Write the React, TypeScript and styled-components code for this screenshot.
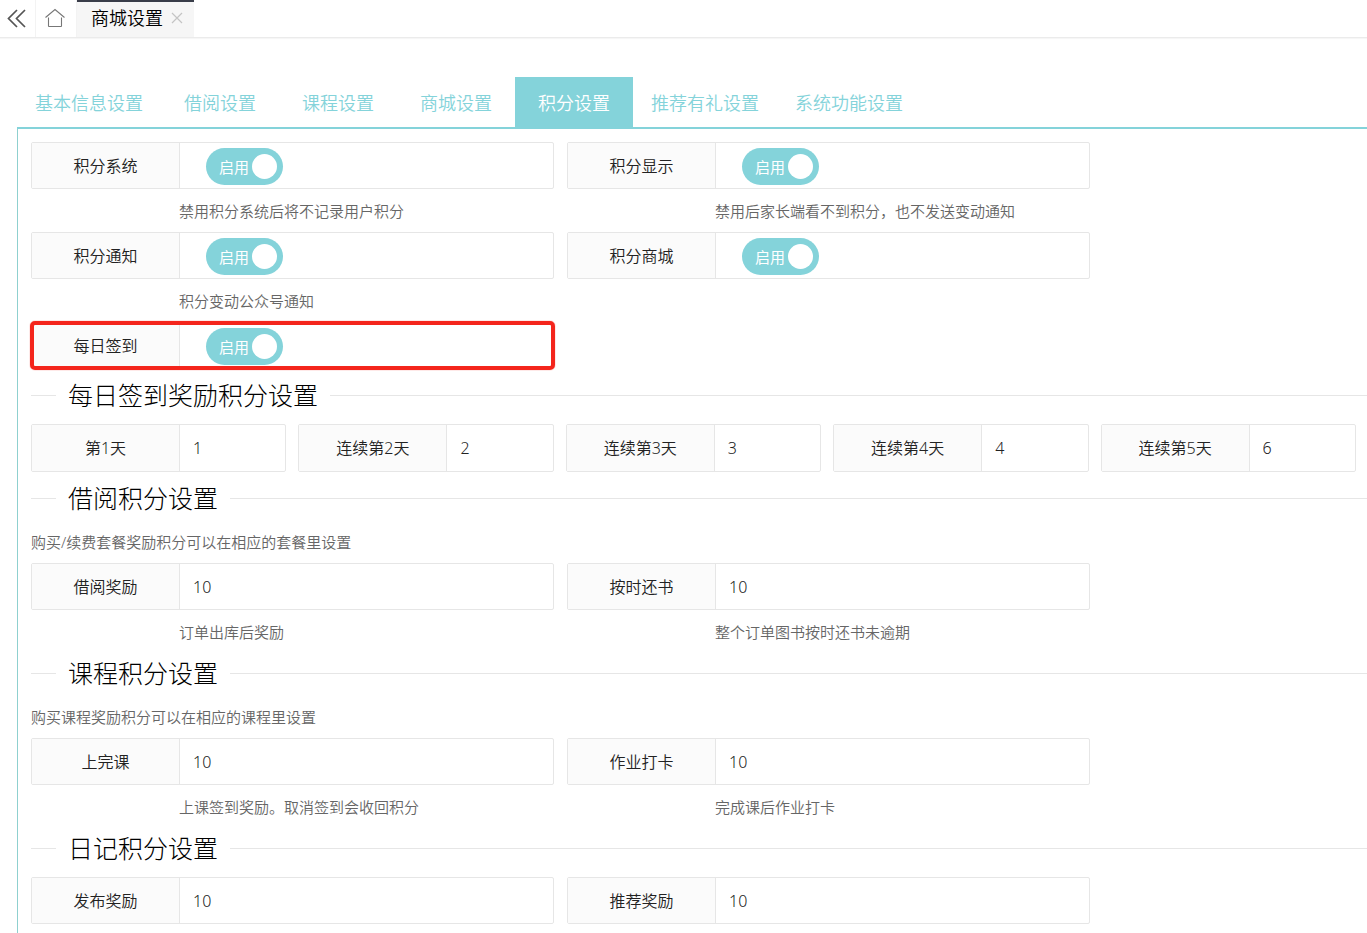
import React from 'react';
import styled, { createGlobalStyle } from 'styled-components';

const teal = '#84d3da';
const line = '#e6e6e6';

const GlobalStyle = createGlobalStyle`
  * { box-sizing: border-box; }
  body {
    margin: 0;
    background: #fff;
    color: #222;
    font-family: 'Noto Sans', 'Noto Sans CJK SC', sans-serif;
    font-size: 16px;
    font-weight: 350;
  }
  #root { overflow-x: hidden; }
  button, input { font: inherit; color: inherit; }
`;

const Page = styled.div`
  display: flex;
  flex-direction: column;
  min-height: 100vh;
`;

const TopBar = styled.header`
  display: flex;
  height: 38px;
  border-bottom: 1px solid #ebebeb;
  box-shadow: 0 1px 1px #f6f6f6;
`;

const IconButton = styled.button<{ $width: number }>`
  display: flex;
  align-items: center;
  justify-content: center;
  width: ${(p) => p.$width}px;
  padding: 0 2px 2px 0;
  border: 0;
  border-right: 1px solid #f3f3f3;
  background: none;
`;

const PageTab = styled.div`
  display: flex;
  align-items: center;
  gap: 8px;
  padding: 0 11px 4px 14px;
  border-top: 2px solid #393d49;
  background: #f6f6f6;
  color: #000;
  font-size: 18px;
  line-height: 30px;
`;

const PageTabLink = styled.a`
  color: inherit;
  text-decoration: none;
`;

const CloseButton = styled.button`
  display: flex;
  padding: 0;
  border: 0;
  background: none;
`;

const Main = styled.main`
  display: flex;
  flex: 1;
  flex-direction: column;
  padding: 39px 0 0 17px;
`;

const TabList = styled.nav`
  display: flex;
  border-bottom: 2px solid ${teal};
`;

const Tab = styled.button<{ $active: boolean }>`
  min-width: 118px;
  height: 50px;
  padding: 2px 18px 0;
  border: 0;
  background: ${(p) => (p.$active ? teal : 'transparent')};
  color: ${(p) => (p.$active ? '#fff' : teal)};
  font-size: 18px;
  line-height: 48px;
  white-space: nowrap;
`;

const Panel = styled.form`
  flex: 1;
  padding: 13px 0 9px 13px;
  border-left: 1px solid #8fd0cf;
`;

const PairGrid = styled.div`
  display: grid;
  grid-template-columns: repeat(2, 39.15%);
  gap: 6px 13px;
`;

const DayGrid = styled.div`
  display: grid;
  grid-template-columns: repeat(5, minmax(0, 1fr));
  gap: 12px;
  margin-right: 11px;
`;

const Item = styled.div`
  position: relative;
`;

const Box = styled.div<{ $tall?: boolean }>`
  display: flex;
  height: ${(p) => (p.$tall ? 48 : 47)}px;
  border: 1px solid ${line};
  border-radius: 2px;
`;

const Label = styled.label`
  display: flex;
  flex: none;
  align-items: center;
  justify-content: center;
  width: 148px;
  padding-bottom: 2px;
  border-right: 1px solid ${line};
  background: #fbfbfb;
  white-space: nowrap;
`;

const TextInput = styled.input`
  flex: 1;
  min-width: 0;
  padding: 0 13px;
  border: 0;
  outline: 0;
  background: transparent;
`;

const Hint = styled.p`
  margin: 7px 0 0 148px;
  color: #666;
  font-size: 15px;
  line-height: 30px;
  white-space: nowrap;
`;

const Intro = styled.p`
  margin: 0 0 6px;
  color: #666;
  font-size: 15px;
  line-height: 30px;
`;

const Heading = styled.h2`
  display: flex;
  align-items: center;
  gap: 12px;
  margin: 0 0 2px;
  color: #000;
  font-size: 25px;
  font-weight: 300;
  line-height: 53px;

  &::before,
  &::after {
    content: '';
    width: 25px;
    height: 1px;
    background: ${line};
  }

  &::after {
    flex: 1;
  }
`;

const SwitchTrack = styled.label`
  display: flex;
  align-items: center;
  align-self: flex-end;
  justify-content: space-between;
  width: 77px;
  height: 37px;
  margin: 0 0 3px 26px;
  padding: 0 6px 0 13px;
  border-radius: 19px;
  background: ${teal};
  color: #fff;
  font-size: 15px;
  font-weight: 400;
`;

const SwitchInput = styled.input`
  appearance: none;
  width: 25px;
  height: 25px;
  margin: 0;
  border-radius: 50%;
  background: #fff;
`;

const Highlight = styled.div`
  position: absolute;
  inset: -1px;
  border: 4px solid #f4251c;
  border-radius: 5px;
  box-shadow: 0 0 1px #f4251c;
  pointer-events: none;
`;

type SwitchProps = { id: string; label: string; hint?: string; highlighted?: boolean };

function SwitchItem({ id, label, hint, highlighted }: SwitchProps) {
  return (
    <Item>
      <Box>
        <Label htmlFor={id}>{label}</Label>
        <SwitchTrack>
          启用
          <SwitchInput id={id} type="checkbox" role="switch" defaultChecked />
        </SwitchTrack>
      </Box>
      {hint && <Hint>{hint}</Hint>}
      {highlighted && <Highlight />}
    </Item>
  );
}

type FieldProps = { id: string; label: string; value: string; hint?: string; tall?: boolean };

function FieldItem({ id, label, value, hint, tall }: FieldProps) {
  return (
    <Item>
      <Box $tall={tall}>
        <Label htmlFor={id}>{label}</Label>
        <TextInput id={id} type="text" defaultValue={value} />
      </Box>
      {hint && <Hint>{hint}</Hint>}
    </Item>
  );
}

const tabs = ['基本信息设置', '借阅设置', '课程设置', '商城设置', '积分设置', '推荐有礼设置', '系统功能设置'];

const days = [
  { label: '第1天', value: '1' },
  { label: '连续第2天', value: '2' },
  { label: '连续第3天', value: '3' },
  { label: '连续第4天', value: '4' },
  { label: '连续第5天', value: '6' },
];

export default function App() {
  return (
    <>
      <GlobalStyle />
      <Page>
        <TopBar>
          <IconButton $width={36} type="button" aria-label="向左滚动">
            <svg width="20" height="20" viewBox="0 0 20 20" fill="none" stroke="#555" strokeWidth="1.7">
              <path d="M10 2 1.500 10.500l8.500 8.500M18 2 9.500 10.500l8.500 8.500" />
            </svg>
          </IconButton>
          <IconButton $width={41} type="button" aria-label="首页">
            <svg width="20" height="20" viewBox="0 0 20 20" fill="none" stroke="#777" strokeWidth="1.1">
              <path d="M.5 9.500 10 1.500l9.500 8M3.500 9.500v8.500q0 .5.5.5h12q.5 0 .5-.5V9.500" />
            </svg>
          </IconButton>
          <PageTab>
            <PageTabLink href="#mall">商城设置</PageTabLink>
            <CloseButton type="button" aria-label="关闭">
              <svg width="12" height="12" viewBox="0 0 12 12" fill="none" stroke="#c4c4c4" strokeWidth="1.2">
                <path d="m1 1 10 10M11 1 1 11" />
              </svg>
            </CloseButton>
          </PageTab>
        </TopBar>
        <Main>
          <TabList>
            {tabs.map((name) => (
              <Tab key={name} type="button" $active={name === '积分设置'}>
                {name}
              </Tab>
            ))}
          </TabList>
          <Panel>
            <PairGrid>
              <SwitchItem id="system" label="积分系统" hint="禁用积分系统后将不记录用户积分" />
              <SwitchItem id="display" label="积分显示" hint="禁用后家长端看不到积分，也不发送变动通知" />
              <SwitchItem id="notice" label="积分通知" hint="积分变动公众号通知" />
              <SwitchItem id="mall" label="积分商城" />
              <SwitchItem id="daily" label="每日签到" highlighted />
            </PairGrid>

            <Heading>每日签到奖励积分设置</Heading>
            <DayGrid>
              {days.map((day, i) => (
                <FieldItem key={day.label} id={`day-${i + 1}`} tall {...day} />
              ))}
            </DayGrid>

            <Heading>借阅积分设置</Heading>
            <Intro>购买/续费套餐奖励积分可以在相应的套餐里设置</Intro>
            <PairGrid>
              <FieldItem id="borrow" label="借阅奖励" value="10" hint="订单出库后奖励" />
              <FieldItem id="return" label="按时还书" value="10" hint="整个订单图书按时还书未逾期" />
            </PairGrid>

            <Heading>课程积分设置</Heading>
            <Intro>购买课程奖励积分可以在相应的课程里设置</Intro>
            <PairGrid>
              <FieldItem id="lesson" label="上完课" value="10" hint="上课签到奖励。取消签到会收回积分" />
              <FieldItem id="homework" label="作业打卡" value="10" hint="完成课后作业打卡" />
            </PairGrid>

            <Heading>日记积分设置</Heading>
            <PairGrid>
              <FieldItem id="publish" label="发布奖励" value="10" />
              <FieldItem id="recommend" label="推荐奖励" value="10" />
            </PairGrid>
          </Panel>
        </Main>
      </Page>
    </>
  );
}
